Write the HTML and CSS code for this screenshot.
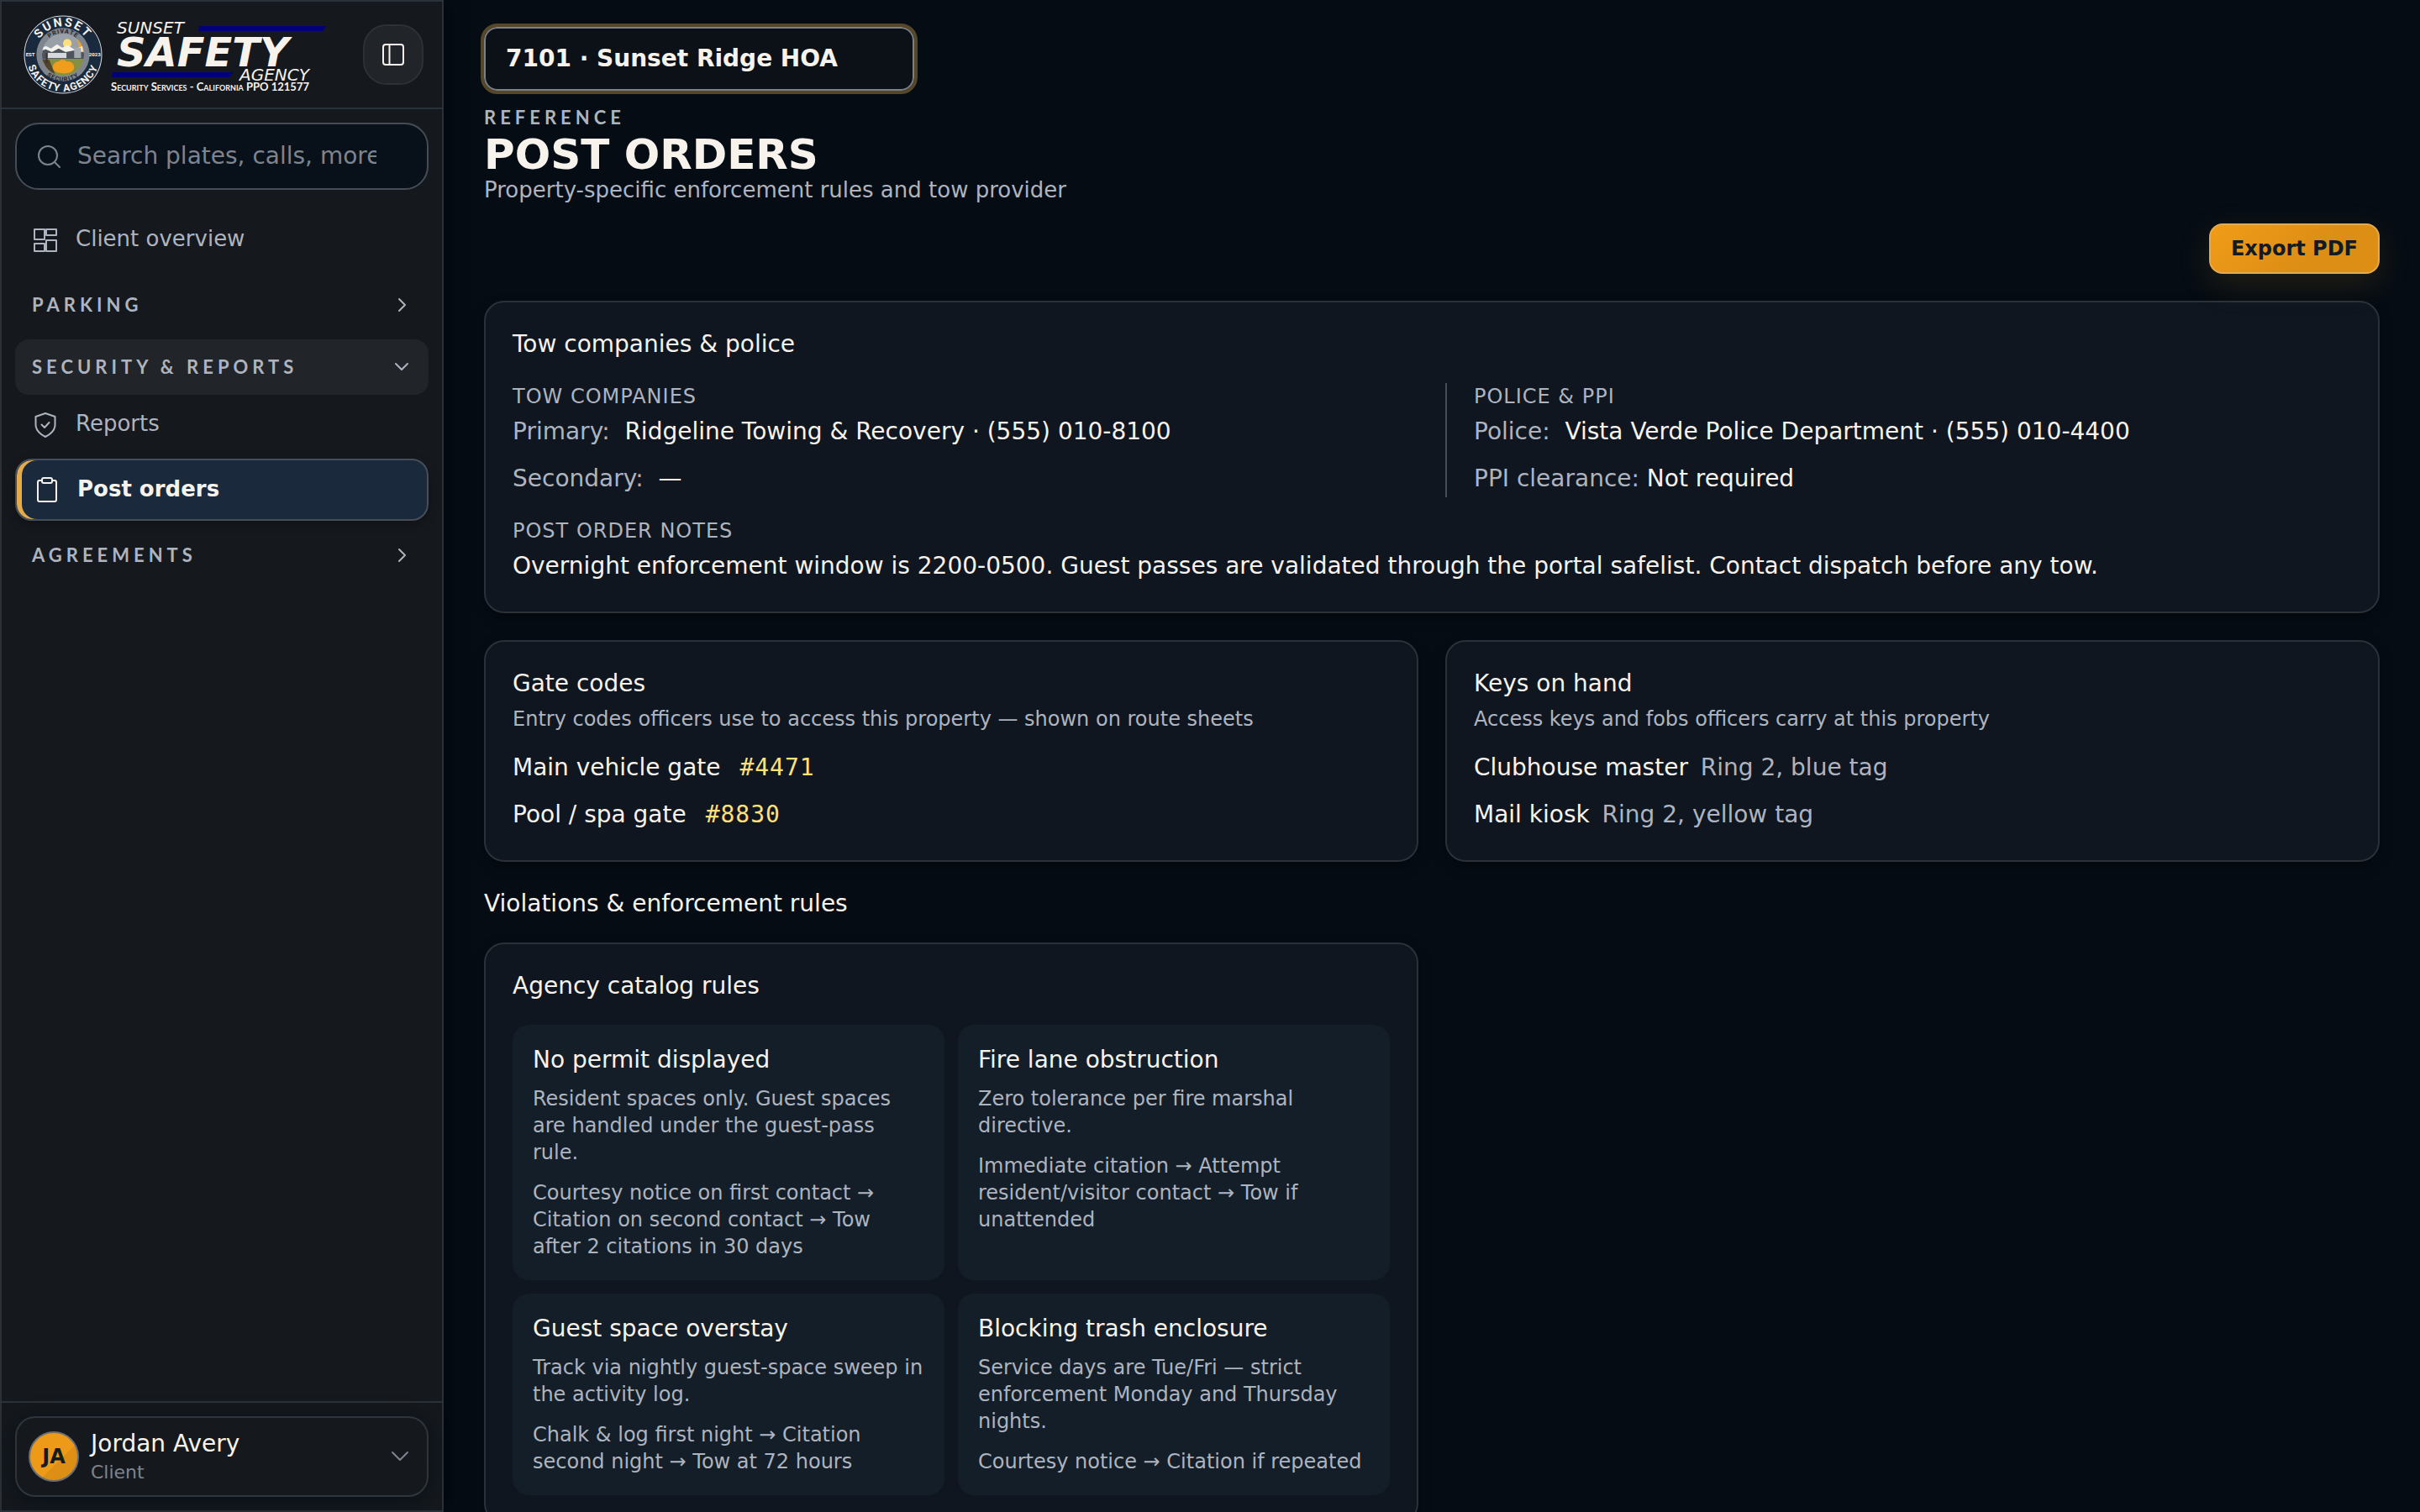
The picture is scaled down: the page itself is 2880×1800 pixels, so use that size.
FILE: index.html
```html
<!DOCTYPE html>
<html lang="en">
<head>
  <meta charset="utf-8"/>
  <meta name="viewport" content="width=device-width, initial-scale=1"/>
  <title>Post Orders</title>
  <link rel="stylesheet" href="styles.css">
</head>
<body>

  <!-- ---------- SIDEBAR ---------- -->
  <aside class="sidebar">
    <div class="sidebar-header">
      <a href="#" class="brand" aria-label="Sunset Safety Agency">
        <svg class="brand-seal" viewBox="0 0 92 92">
          <defs>
            <clipPath id="sealClip"><circle cx="46" cy="46" r="24.500"/></clipPath>
            <path id="arcTop" d="M13 46a33 33 0 0 1 66 0"/>
            <path id="arcBottom" d="M3 46a43 43 0 0 0 86 0"/>
            <path id="arcInnerTop" d="M21 46a25 25 0 0 1 50 0"/>
            <path id="arcInnerBottom" d="M15 46a31 31 0 0 0 62 0"/>
          </defs>
          <circle cx="46" cy="46" r="45" fill="#1a2a3e" stroke="#d9dce0" stroke-width="1"/>
          <circle cx="46" cy="46" r="31" fill="#7f858e"/>
          <g clip-path="url(#sealClip)">
            <rect x="20" y="20" width="52" height="52" fill="#9aa0a8"/>
            <circle cx="51" cy="33" r="5" fill="#ffe07a"/>
            <path d="M62 26h12v18h-8z" fill="#e8a030"/>
            <path d="M18 40l8-4 6 3 7-5 6 4 6-3 8 5 10-4v10H18z" fill="#f3f1ec"/>
            <path d="M18 42l8-2 7 3 8-4 8 4 10-2 14 3v10H18z" fill="#4d545d"/>
            <rect x="28" y="44" width="22" height="6" fill="#d5d8dc"/>
            <path d="M59 38h8v12h-8z" fill="#a4a9b0"/>
            <path d="M18 51h56v22H18z" fill="#84903f"/>
            <path d="M18 51l12 1 8 20H18z" fill="#53432c"/>
            <path d="M34 61c0-5 4-7 7-7 2-3 7-3 9 0 4-1 9 2 9 7 0 4-4 7-12 7s-13-3-13-7z" fill="#f09c1c"/>
            <path d="M27 44v12" stroke="#3a3430" stroke-width="2"/>
          </g>
          <g class="seal-text">
            <text><textPath href="#arcTop" startOffset="50%">SUNSET</textPath></text>
            <text class="seal-lower"><textPath href="#arcBottom" startOffset="50%">SAFETY AGENCY</textPath></text>
            <text class="seal-inner"><textPath href="#arcInnerTop" startOffset="50%">PRIVATE</textPath></text>
            <text class="seal-inner"><textPath href="#arcInnerBottom" startOffset="50%">SECURITY</textPath></text>
            <text class="seal-year" x="8" y="48">EST</text>
            <text class="seal-year" x="83" y="48">2023</text>
          </g>
        </svg>
        <svg class="brand-name" viewBox="0 0 260 92">
          <path d="M107 12h151l-4 6H106z" fill="#00007d"/>
          <path d="M4 67h144l-5 6H3z" fill="#00007d"/>
          <text class="name-thin" x="9" y="21">SUNSET</text>
          <text class="name-bold" x="9" y="60">SAFETY</text>
          <text class="name-thin" x="155" y="77">AGENCY</text>
          <text class="name-tag" x="2" y="89">Security Services - California PPO 121577</text>
        </svg>
      </a>
      <button type="button" class="btn-collapse" aria-label="Collapse sidebar">
        <svg class="icon" viewBox="0 0 28 28"><rect x="2" y="2" width="24" height="24" rx="3"/><path d="M9.500 2v24"/></svg>
      </button>
    </div>

    <div class="sidebar-body">
      <div class="search">
        <svg class="icon" viewBox="0 0 28 28"><circle cx="13" cy="13" r="11"/><path d="M21 21l6 6"/></svg>
        <input type="text" aria-label="Search" placeholder="Search plates, calls, more"/>
      </div>

      <nav class="nav">
        <a href="#" class="nav-link">
          <svg class="icon" viewBox="0 0 28 28"><rect x="1" y="1" width="12" height="12"/><rect x="15" y="1" width="12" height="7"/><rect x="1" y="18" width="12" height="9"/><rect x="15" y="14" width="12" height="13"/></svg>
          <span>Client overview</span>
        </a>
        <button type="button" class="nav-group">PARKING
          <svg class="icon chevron" viewBox="0 0 16 16"><path d="M5 1l7 7-7 7"/></svg>
        </button>
        <button type="button" class="nav-group open">SECURITY &amp; REPORTS
          <svg class="icon chevron" viewBox="0 0 16 16"><path d="M1 4l7 7 7-7"/></svg>
        </button>
        <a href="#" class="nav-link">
          <svg class="icon" viewBox="0 0 28 28"><path d="M14 0l11.500 4v9.500c0 7-4.500 11-11.500 14.500C7 24.500 2.500 20.500 2.500 13.500V4z"/><path d="M9.500 13.500l3.500 3.500 5.500-6"/></svg>
          <span>Reports</span>
        </a>
        <a href="#" class="nav-link active" aria-current="page">
          <svg class="icon" viewBox="0 0 28 28"><path d="M8 3H5a2 2 0 0 0-2 2v21a2 2 0 0 0 2 2h18a2 2 0 0 0 2-2V5a2 2 0 0 0-2-2h-3"/><rect x="8" y="0" width="12" height="6" rx="2"/></svg>
          <span>Post orders</span>
        </a>
        <button type="button" class="nav-group">AGREEMENTS
          <svg class="icon chevron" viewBox="0 0 16 16"><path d="M5 1l7 7-7 7"/></svg>
        </button>
      </nav>
    </div>

    <div class="sidebar-footer">
      <button type="button" class="user-card">
        <span class="avatar">JA</span>
        <span class="user-info">
          <span class="user-name">Jordan Avery</span>
          <span class="user-role">Client</span>
        </span>
        <svg class="icon user-chevron" viewBox="0 0 20 20"><path d="M1 5l9 9 9-9"/></svg>
      </button>
    </div>
  </aside>

  <!-- ---------- MAIN CONTENT ---------- -->
  <main class="main">
    <header class="page-header">
      <select class="property-select" aria-label="Property">
        <option>7101 · Sunset Ridge HOA</option>
      </select>
      <p class="eyebrow">REFERENCE</p>
      <h1>POST ORDERS</h1>
      <p class="subtitle">Property-specific enforcement rules and tow provider</p>
      <div class="actions">
        <button type="button" class="btn-export">Export PDF</button>
      </div>
    </header>

    <section class="card">
      <h2>Tow companies &amp; police</h2>
      <div class="card-cols">
        <div>
          <h3 class="label">TOW COMPANIES</h3>
          <div class="rows">
            <p><span class="key">Primary:</span>&nbsp; Ridgeline Towing &amp; Recovery · (555) 010-8100</p>
            <p><span class="key">Secondary:</span>&nbsp; —</p>
          </div>
        </div>
        <div class="col-divided">
          <h3 class="label">POLICE &amp; PPI</h3>
          <div class="rows">
            <p><span class="key">Police:</span>&nbsp; Vista Verde Police Department · (555) 010-4400</p>
            <p><span class="key">PPI clearance:</span> Not required</p>
          </div>
        </div>
      </div>
      <div class="notes">
        <h3 class="label">POST ORDER NOTES</h3>
        <div class="rows">
          <p>Overnight enforcement window is 2200-0500. Guest passes are validated through the portal safelist. Contact dispatch before any tow.</p>
        </div>
      </div>
    </section>

    <div class="card-grid">
      <section class="card">
        <h2>Gate codes</h2>
        <p class="desc">Entry codes officers use to access this property — shown on route sheets</p>
        <div class="rows access">
          <p>Main vehicle gate <code>#4471</code></p>
          <p>Pool / spa gate <code>#8830</code></p>
        </div>
      </section>
      <section class="card">
        <h2>Keys on hand</h2>
        <p class="desc">Access keys and fobs officers carry at this property</p>
        <div class="rows access">
          <p>Clubhouse master <span class="key-note">Ring 2, blue tag</span></p>
          <p>Mail kiosk <span class="key-note">Ring 2, yellow tag</span></p>
        </div>
      </section>
    </div>

    <section class="violations">
      <h2>Violations &amp; enforcement rules</h2>
      <div class="card-grid">
        <div class="card">
          <h2>Agency catalog rules</h2>
          <div class="rule-grid">
            <article class="rule">
              <h3>No permit displayed</h3>
              <p>Resident spaces only. Guest spaces are handled under the guest-pass rule.</p>
              <p>Courtesy notice on first contact → Citation on second contact → Tow after 2 citations in 30 days</p>
            </article>
            <article class="rule">
              <h3>Fire lane obstruction</h3>
              <p>Zero tolerance per fire marshal directive.</p>
              <p>Immediate citation → Attempt resident/visitor contact → Tow if unattended</p>
            </article>
            <article class="rule">
              <h3>Guest space overstay</h3>
              <p>Track via nightly guest-space sweep in the activity log.</p>
              <p>Chalk &amp; log first night → Citation second night → Tow at 72 hours</p>
            </article>
            <article class="rule">
              <h3>Blocking trash enclosure</h3>
              <p>Service days are Tue/Fri — strict enforcement Monday and Thursday nights.</p>
              <p>Courtesy notice → Citation if repeated</p>
            </article>
          </div>
        </div>
      </div>
    </section>
  </main>

</body>
</html>
```
FILE: styles.css
```css
/* Basic reset */
* {
  box-sizing: border-box;
  margin: 0;
  padding: 0;
}
body {
  display: flex;
  height: 100vh;
  overflow: hidden;
  background: #050c14;
  color: #f7f3ec;
  font-family: "DejaVu Sans", Verdana, sans-serif;
  font-size: 28px;
  line-height: 36px;
}
button,
input,
select {
  font: inherit;
  color: inherit;
}
button {
  cursor: pointer;
}
a {
  color: inherit;
  text-decoration: none;
}
h1,
h2,
h3 {
  font-size: 28px;
  font-weight: 400;
}
.icon {
  width: 28px;
  height: 28px;
  flex: none;
  fill: none;
  stroke: currentColor;
  stroke-width: 2;
  stroke-linecap: round;
  stroke-linejoin: round;
  overflow: visible;
}

/* ---------- SIDEBAR ---------- */
.sidebar {
  display: flex;
  flex-direction: column;
  flex: none;
  width: 528px;
  background: #15191e;
  border: 2px solid #2b3138;
  box-shadow: 4px 0 24px rgba(0, 0, 0, 0.4);
}
.sidebar-header {
  display: flex;
  align-items: center;
  justify-content: space-between;
  height: 128px;
  padding: 0 22px 0 26px;
  border-bottom: 2px solid #2b3138;
}
.brand {
  display: flex;
  align-items: center;
  gap: 8px;
}
.brand-seal {
  width: 94px;
  height: 94px;
}
.brand-name {
  width: 260px;
  height: 92px;
}
.seal-text {
  font-family: "Roboto", sans-serif;
  font-size: 14px;
  font-weight: 700;
  letter-spacing: 2px;
  text-anchor: middle;
  fill: #f7f3ec;
}
.seal-lower {
  font-size: 12px;
  letter-spacing: 1px;
}
.seal-inner {
  font-size: 7px;
  letter-spacing: 1px;
  fill: #22262c;
}
.seal-year {
  font-size: 6px;
  letter-spacing: 0;
}
.name-thin,
.name-bold {
  font-family: "DejaVu Sans", Verdana, sans-serif;
  font-style: italic;
  fill: #f7f3ec;
}
.name-thin {
  font-size: 20px;
  font-weight: 200;
}
.name-bold {
  font-size: 48px;
  font-weight: 700;
}
.name-tag {
  font-family: "Lato", sans-serif;
  font-size: 13px;
  font-weight: 700;
  font-variant: small-caps;
  fill: #f7f3ec;
}
.btn-collapse {
  display: flex;
  align-items: center;
  justify-content: center;
  width: 72px;
  height: 72px;
  background: #212429;
  border: 2px solid #2b3138;
  border-radius: 28px;
}
.sidebar-body {
  flex: 1;
  padding: 16px;
}

/* search */
.search {
  display: flex;
  align-items: center;
  gap: 20px;
  height: 80px;
  padding: 0 60px 0 24px;
  background: #08101a;
  border: 2px solid #454c55;
  border-radius: 28px;
  color: #7e848e;
}
.search input {
  flex: 1;
  min-width: 0;
  background: none;
  border: none;
  outline: none;
}
.search input::placeholder {
  color: #7e848e;
  opacity: 1;
}

/* navigation */
.nav {
  display: flex;
  flex-direction: column;
  gap: 8px;
  margin-top: 28px;
}
.nav-link {
  display: flex;
  align-items: center;
  gap: 22px;
  height: 64px;
  padding: 0 22px;
  color: #aeb4bf;
  font-size: 26px;
}
.nav-link:first-child {
  margin-bottom: 4px;
}
.nav-link span {
  padding-bottom: 4px;
}
.nav-link.active {
  height: 74px;
  background: #1a2a3c;
  border: 2px solid #454e59;
  border-radius: 20px;
  box-shadow: inset 6px 0 0 #e5ab4b, 0 4px 12px rgba(0, 0, 0, 0.3);
  color: #f7f3ec;
  font-weight: 700;
}
.nav-link.active span {
  padding-bottom: 2px;
}
.nav-group {
  display: flex;
  align-items: center;
  justify-content: space-between;
  height: 66px;
  padding: 0 24px 0 20px;
  background: none;
  border: none;
  border-radius: 16px;
  color: #aeb4bf;
  font-family: "Lato", sans-serif;
  font-size: 22px;
  font-weight: 700;
  letter-spacing: 5px;
}
.nav-group.open {
  margin-bottom: -4px;
  background: #212429;
}
.chevron {
  width: 16px;
  height: 16px;
}

/* user card */
.sidebar-footer {
  padding: 16px;
  border-top: 2px solid #2b3138;
}
.user-card {
  display: flex;
  align-items: center;
  gap: 14px;
  width: 100%;
  height: 96px;
  padding: 0 22px 0 14px;
  background: #15191e;
  border: 2px solid #2f353c;
  border-radius: 24px;
  box-shadow: 0 4px 24px rgba(4, 11, 19, 0.7);
  text-align: left;
}
.avatar {
  display: flex;
  align-items: center;
  justify-content: center;
  width: 60px;
  height: 60px;
  background: linear-gradient(135deg, #ed9a18 60%, #dd8e15 60%);
  border: 2px solid #6b7078;
  border-radius: 50%;
  color: #121b24;
  font-size: 24px;
  font-weight: 700;
}
.user-info {
  display: flex;
  flex-direction: column;
  flex: 1;
  padding-top: 2px;
}
.user-role {
  color: #7e848e;
  font-size: 22px;
  line-height: 32px;
}
.user-chevron {
  width: 20px;
  height: 20px;
  color: #7e848e;
}

/* ---------- MAIN CONTENT ---------- */
.main {
  flex: 1;
  min-width: 0;
  padding: 32px 48px;
  overflow: hidden;
}
.property-select {
  display: block;
  width: 512px;
  height: 76px;
  padding: 0 24px;
  appearance: none;
  background: #0c1117;
  border: 2px solid #7b818a;
  border-radius: 16px;
  outline: 4px solid #574729;
  font-weight: 700;
}
.eyebrow {
  margin-top: 16px;
  color: #aeb4bf;
  font-family: "Lato", sans-serif;
  font-size: 22px;
  font-weight: 700;
  line-height: 32px;
  letter-spacing: 5px;
}
h1 {
  margin-top: 4px;
  font-size: 50px;
  font-weight: 700;
  line-height: 48px;
}
.subtitle {
  color: #aeb4bf;
  font-size: 26px;
  line-height: 36px;
}
.actions {
  display: flex;
  justify-content: flex-end;
  margin-top: 22px;
}
.btn-export {
  height: 60px;
  padding: 0 24px;
  background: linear-gradient(135deg, #f09c18, #dd8e15 60%);
  border: 2px solid #e5ab4b;
  border-radius: 16px;
  box-shadow: 0 12px 40px rgba(237, 154, 24, 0.14);
  color: #121b24;
  font-size: 24px;
  font-weight: 700;
}

/* ---------- CARDS ---------- */
.card {
  margin-top: 32px;
  padding: 32px;
  background: #0f1620;
  border: 2px solid #2b3138;
  border-radius: 24px;
  box-shadow: 0 6px 16px rgba(0, 0, 0, 0.3);
}
.card-grid {
  display: grid;
  grid-template-columns: 1fr 1fr;
  gap: 32px;
}
.card-cols {
  display: grid;
  grid-template-columns: 1fr 1fr;
  gap: 32px;
  margin-top: 28px;
}
.col-divided {
  padding-left: 32px;
  border-left: 2px solid #454c55;
}
.label,
.desc {
  color: #aeb4bf;
  font-size: 24px;
  line-height: 32px;
}
.label {
  margin-bottom: 4px;
  letter-spacing: 1px;
}
.desc {
  margin-top: 8px;
}
.rows {
  display: flex;
  flex-direction: column;
  gap: 12px;
  line-height: 44px;
}
.key,
.key-note {
  color: #aeb4bf;
}
.notes {
  margin-top: 24px;
}
.access {
  margin-top: 20px;
}
.access code {
  margin-left: 14px;
  color: #ffe07a;
  font-family: "DejaVu Sans Mono", monospace;
  font-size: 28px;
  letter-spacing: 1px;
}
.key-note {
  margin-left: 6px;
}

/* ---------- VIOLATIONS ---------- */
.violations {
  margin-top: 32px;
}
.violations .card {
  margin-top: 28px;
}
.rule-grid {
  display: grid;
  grid-template-columns: 1fr 1fr;
  gap: 16px;
  margin-top: 28px;
}
.rule {
  padding: 24px;
  background: #141e28;
  border-radius: 20px;
}
.rule p {
  margin-top: 16px;
  color: #aeb4bf;
  font-size: 24px;
  line-height: 32px;
}
.rule h3 + p {
  margin-top: 12px;
}
```
